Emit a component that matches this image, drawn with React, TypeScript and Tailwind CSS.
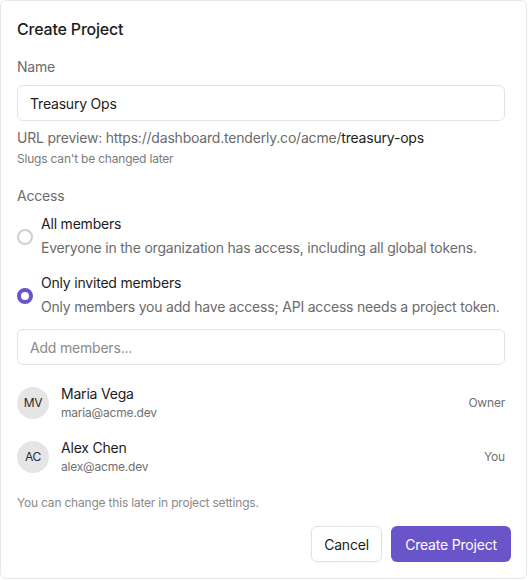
import React from "react";

export default function App() {
  const font = { fontFamily: "Inter, 'Noto Sans', sans-serif", letterSpacing: "-0.2px" };
  return (
    <div className="w-[528px] h-[580px] bg-white" style={font}>
      <div className="w-[527px] h-[579px] border border-[#e8e8e8] rounded-[6px] bg-white pl-4 pt-[16px] flex flex-col">
        <h2 className="text-[16px] leading-[24px] font-medium text-[#1c1c1c]">Create Project</h2>

        <div className="mt-[16px] text-[14px] leading-[20px] text-[#6b6b6b]">Name</div>
        <div className="mt-[8px] h-[36px] w-[488px] border border-[#e3e3e3] rounded-[6px] flex items-center px-3 text-[14px] text-[#1c1c1c]">
          Treasury Ops
        </div>
        <div className="mt-[7px] text-[14px] leading-[20px] text-[#6b6b6b]">
          URL preview: https://dashboard.tenderly.co/acme/<span className="text-[#1c1c1c]">treasury-ops</span>
        </div>
        <div className="mt-[3px] text-[12px] leading-[16px] text-[#7a7a7a]">Slugs can't be changed later</div>

        <div className="mt-[19px] text-[14px] leading-[20px] text-[#6b6b6b]">Access</div>

        <div className="mt-[8px] flex items-center gap-2">
          <div className="w-4 h-4 rounded-full border-2 border-[#cfcfcf] shrink-0 mt-[2px]" />
          <div className="flex flex-col">
            <div className="text-[14px] leading-[20px] text-[#1c1c1c]">All members</div>
            <div className="mt-[4px] text-[14px] leading-[20px] text-[#6b6b6b] whitespace-nowrap">
              Everyone in the organization has access, including all global tokens.
            </div>
          </div>
        </div>

        <div className="mt-[15px] flex items-center gap-2">
          <div className="w-4 h-4 rounded-full border-[4px] border-[#6a54c9] bg-white shrink-0 mt-[2px]" />
          <div className="flex flex-col">
            <div className="text-[14px] leading-[20px] text-[#1c1c1c]">Only invited members</div>
            <div className="mt-[4px] text-[14px] leading-[20px] text-[#6b6b6b] whitespace-nowrap">
              Only members you add have access; API access needs a project token.
            </div>
          </div>
        </div>

        <div className="mt-[12px] h-[36px] w-[488px] border border-[#e3e3e3] rounded-[6px] flex items-center px-3 text-[14px] text-[#8a8a8a]">
          Add members...
        </div>

        <div className="mt-[19px] w-[488px] flex items-center gap-3">
          <div className="w-8 h-8 rounded-full bg-[#e5e5e5] flex items-center justify-center text-[12px] text-[#2a2a2a] shrink-0">MV</div>
          <div className="flex flex-col flex-1">
            <div className="text-[14px] leading-[20px] text-[#1c1c1c]">Maria Vega</div>
            <div className="text-[12px] leading-[18px] text-[#707070]">maria@acme.dev</div>
          </div>
          <div className="text-[12px] text-[#707070]">Owner</div>
        </div>

        <div className="mt-[16px] w-[488px] flex items-center gap-3">
          <div className="w-8 h-8 rounded-full bg-[#e5e5e5] flex items-center justify-center text-[12px] text-[#2a2a2a] shrink-0">AC</div>
          <div className="flex flex-col flex-1">
            <div className="text-[14px] leading-[20px] text-[#1c1c1c]">Alex Chen</div>
            <div className="text-[12px] leading-[18px] text-[#707070]">alex@acme.dev</div>
          </div>
          <div className="text-[12px] text-[#707070]">You</div>
        </div>

        <div className="mt-[19px] text-[12px] leading-[16px] text-[#8a8a8a]">You can change this later in project settings.</div>

        <div className="mt-[15px] w-[494px] flex justify-end gap-[9px]">
          <button className="h-[36px] w-[71px] rounded-[6px] border border-[#e3e3e3] bg-white text-[14px] text-[#1c1c1c] shadow-[0_1px_2px_rgba(0,0,0,0.04)]">
            Cancel
          </button>
          <button className="h-[36px] w-[120px] rounded-[6px] bg-[#6a54c9] text-[14px] text-white">
            Create Project
          </button>
        </div>
      </div>
    </div>
  );
}
